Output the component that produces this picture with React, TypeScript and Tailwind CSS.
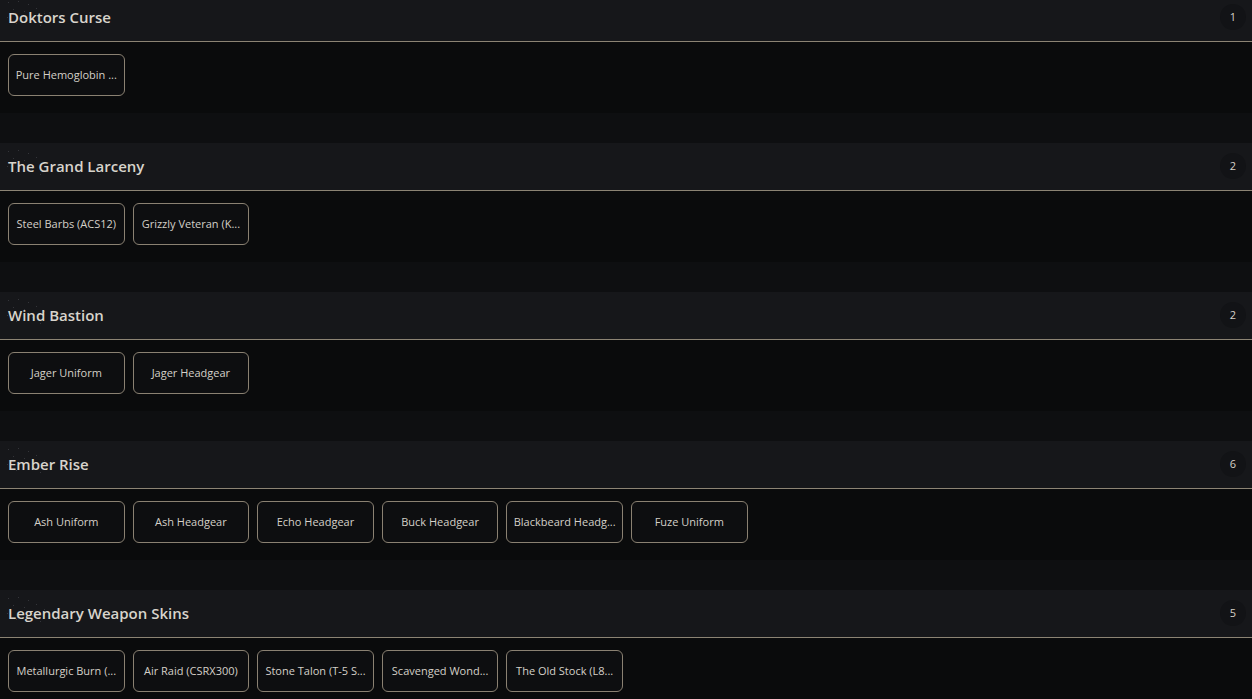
import React from "react";

type Section = { title: string; items: string[] };

const sections: Section[] = [
  { title: "Doktors Curse", items: ["Pure Hemoglobin ..."] },
  { title: "The Grand Larceny", items: ["Steel Barbs (ACS12)", "Grizzly Veteran (K..."] },
  { title: "Wind Bastion", items: ["Jager Uniform", "Jager Headgear"] },
  {
    title: "Ember Rise",
    items: ["Ash Uniform", "Ash Headgear", "Echo Headgear", "Buck Headgear", "Blackbeard Headg...", "Fuze Uniform"],
  },
  {
    title: "Legendary Weapon Skins",
    items: ["Metallurgic Burn (...", "Air Raid (CSRX300)", "Stone Talon (T-5 S...", "Scavenged Wond...", "The Old Stock (L8..."],
  },
];

function Dots() {
  const pts = [
    [4, 3], [14, 2], [24, 5], [9, 10], [20, 12], [32, 9], [3, 18], [28, 20], [40, 14], [12, 24], [36, 26],
  ];
  return (
    <svg className="absolute left-1 top-[5px]" width="46" height="32" viewBox="0 0 46 32">
      {pts.map(([x, y], i) => (
        <rect key={i} x={x} y={y} width="1" height="1" fill="#34353a" />
      ))}
    </svg>
  );
}

function SectionBlock({ s }: { s: Section }) {
  return (
    <section className="flex flex-col">
      <header className="relative flex h-[48px] items-center justify-between border-b border-[#8c8474] bg-[#16171a] pl-2 pr-[6px]">
        <Dots />
        <h2 className="relative text-[15px] font-semibold text-[#d8d4cc]">{s.title}</h2>
        <span className="-mt-[1px] flex h-[26px] w-[26px] items-center justify-center rounded-full bg-[#121316] text-[11px] text-[#d6d1c8]">
          {s.items.length}
        </span>
      </header>
      <div className="flex h-[101px] flex-col bg-[#0a0b0c]">
        <div className="flex gap-2 px-2 pt-[12px]">
          {s.items.map((it) => (
            <button
              key={it}
              className="flex h-[42px] w-[116.6px] shrink-0 items-center justify-center overflow-hidden whitespace-nowrap rounded-[6px] border border-[#8a8172] bg-[#0d0e10] px-2 text-[11px] text-[#d4d0c8]"
            >
              {it}
            </button>
          ))}
        </div>
        <div className="flex-1" />
        <div className="h-[30px] bg-[#0e0f11]" />
      </div>
    </section>
  );
}

export default function App() {
  return (
    <div
      className="h-[699px] w-full overflow-hidden bg-[#0a0b0c]"
      style={{ fontFamily: '"Open Sans", "Noto Sans", sans-serif' }}
    >
      <div className="-mt-[6px] flex flex-col">
        {sections.map((s) => (
          <SectionBlock key={s.title} s={s} />
        ))}
      </div>
    </div>
  );
}
